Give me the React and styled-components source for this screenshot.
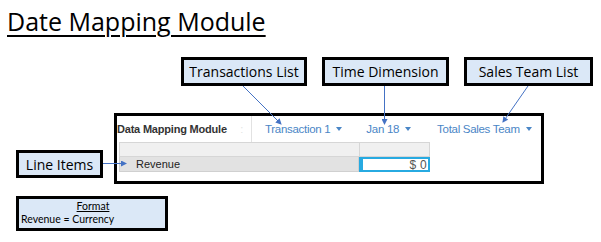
import React from "react";
import styled, { createGlobalStyle } from "styled-components";

const Global = createGlobalStyle`
  html, body { margin: 0; padding: 0; background: #fff; }
  * { box-sizing: border-box; }
`;

const Stage = styled.div`
  position: relative;
  width: 601px;
  height: 242px;
  overflow: hidden;
  font-family: "Open Sans", "Liberation Sans", sans-serif;
`;

const Title = styled.h1`
  margin: 0;
  padding: 4px 0 0 7px;
  font-family: "Open Sans", sans-serif;
  font-weight: 400;
  font-size: 25px;
  line-height: 34px;
  color: #000;
  text-decoration: underline;
  text-decoration-thickness: 2px;
  text-underline-offset: 4px;
`;

const Callout = styled.div`
  position: absolute;
  left: ${(p) => p.$x}px;
  top: ${(p) => p.$y}px;
  width: ${(p) => p.$w}px;
  height: ${(p) => p.$h}px;
  border: 3px solid #000;
  background: #dbe8f7;
  display: flex;
  align-items: center;
  justify-content: center;
  font-family: "Open Sans", sans-serif;
  font-size: 14px;
  color: #000;
`;

const FormatBox = styled.div`
  position: absolute;
  left: 16px;
  top: 196px;
  width: 152px;
  height: 35px;
  border: 3px solid #000;
  background: #dbe8f7;
  display: flex;
  flex-direction: column;
  padding: 1px 0 0 2px;
  font-family: Lato, "Open Sans", sans-serif;
  font-size: 10.5px;
  line-height: 13px;
  color: #000;
`;

const FormatHead = styled.div`
  text-align: center;
  text-decoration: underline;
`;

const Module = styled.div`
  position: absolute;
  left: 114px;
  top: 113px;
  width: 430px;
  height: 71px;
  border: 3px solid #000;
  background: #fff;
  display: flex;
  flex-direction: column;
  font-family: "Liberation Sans", Arial, sans-serif;
`;

const Toolbar = styled.div`
  display: flex;
  align-items: center;
  height: 26px;
`;

const ModuleName = styled.div`
  width: 135px;
  height: 100%;
  display: flex;
  align-items: center;
  justify-content: space-between;
  border-right: 1px solid #e2e2e2;
  padding-right: 8px;
  font-size: 11px;
  font-weight: 700;
  color: #333;
  letter-spacing: -0.2px;
`;

const Dots = styled.span`
  color: #e4e4e4;
  font-weight: 400;
`;

const Dropdowns = styled.div`
  display: flex;
  align-items: center;
`;

const Dropdown = styled.div`
  display: flex;
  align-items: center;
  gap: 6px;
  margin-left: ${(p) => p.$ml}px;
  font-size: 11.5px;
  color: #4a86c6;
  letter-spacing: -0.3px;
`;

const Caret = styled.span`
  width: 0;
  height: 0;
  border-left: 3.5px solid transparent;
  border-right: 3.5px solid transparent;
  border-top: 4px solid #4a86c6;
`;

const Grid = styled.div`
  margin-left: 2px;
  width: 311px;
  display: grid;
  grid-template-columns: 240px 71px;
  grid-template-rows: 15px 15px;
`;

const HeadCell = styled.div`
  background: #f0f0f0;
  border: 1px solid #d6d6d6;
  border-right: ${(p) => (p.$last ? "1px solid #d6d6d6" : "none")};
`;

const LabelCell = styled.div`
  background: #e2e2e2;
  border: 1px solid #d0d0d0;
  border-top: none;
  display: flex;
  align-items: center;
  padding-left: 16px;
  font-size: 11px;
  color: #222;
`;

const ValueCell = styled.div`
  border: 2px solid #27aae1;
  border-left: 4px solid #27aae1;
  background: #fff;
  display: flex;
  align-items: center;
  justify-content: flex-end;
  padding-right: 1px;
  font-size: 12px;
  color: #555;
  letter-spacing: 0.3px;
`;

const Arrows = styled.svg`
  position: absolute;
  left: 0;
  top: 0;
  pointer-events: none;
`;

export default function App() {
  return (
    <>
      <Global />
      <Stage>
        <Title>Date Mapping Module</Title>

        <Module>
          <Toolbar>
            <ModuleName>
              <span>Data Mapping Module</span>
              <Dots>:</Dots>
            </ModuleName>
            <Dropdowns>
              <Dropdown $ml={13}>
                Transaction 1 <Caret />
              </Dropdown>
              <Dropdown $ml={24}>
                Jan 18 <Caret />
              </Dropdown>
              <Dropdown $ml={26}>
                Total Sales Team <Caret />
              </Dropdown>
            </Dropdowns>
          </Toolbar>
          <Grid>
            <HeadCell />
            <HeadCell $last />
            <LabelCell>Revenue</LabelCell>
            <ValueCell>$ 0</ValueCell>
          </Grid>
        </Module>

        <Callout $x={181} $y={57} $w={126} $h={29}>Transactions List</Callout>
        <Callout $x={322} $y={57} $w={127} $h={29}>Time Dimension</Callout>
        <Callout $x={464} $y={57} $w={129} $h={29}>Sales Team List</Callout>
        <Callout $x={16} $y={150} $w={87} $h={28}>Line Items</Callout>

        <FormatBox>
          <FormatHead>Format</FormatHead>
          <div>Revenue = Currency</div>
        </FormatBox>

        <Arrows width="601" height="242" viewBox="0 0 601 242">
          <defs>
            <marker id="ah" markerWidth="6" markerHeight="6" refX="5" refY="3" orient="auto" markerUnits="userSpaceOnUse">
              <path d="M0,0 L6,3 L0,6 Z" fill="#4472c4" />
            </marker>
          </defs>
          <g stroke="#4472c4" strokeWidth="1" fill="none">
            <line x1="243" y1="86" x2="281" y2="124" markerEnd="url(#ah)" />
            <line x1="384.5" y1="86" x2="384.5" y2="124" markerEnd="url(#ah)" />
            <line x1="528" y1="86" x2="503" y2="122" markerEnd="url(#ah)" />
            <line x1="103" y1="163.5" x2="126" y2="163.5" markerEnd="url(#ah)" />
          </g>
        </Arrows>
      </Stage>
    </>
  );
}
